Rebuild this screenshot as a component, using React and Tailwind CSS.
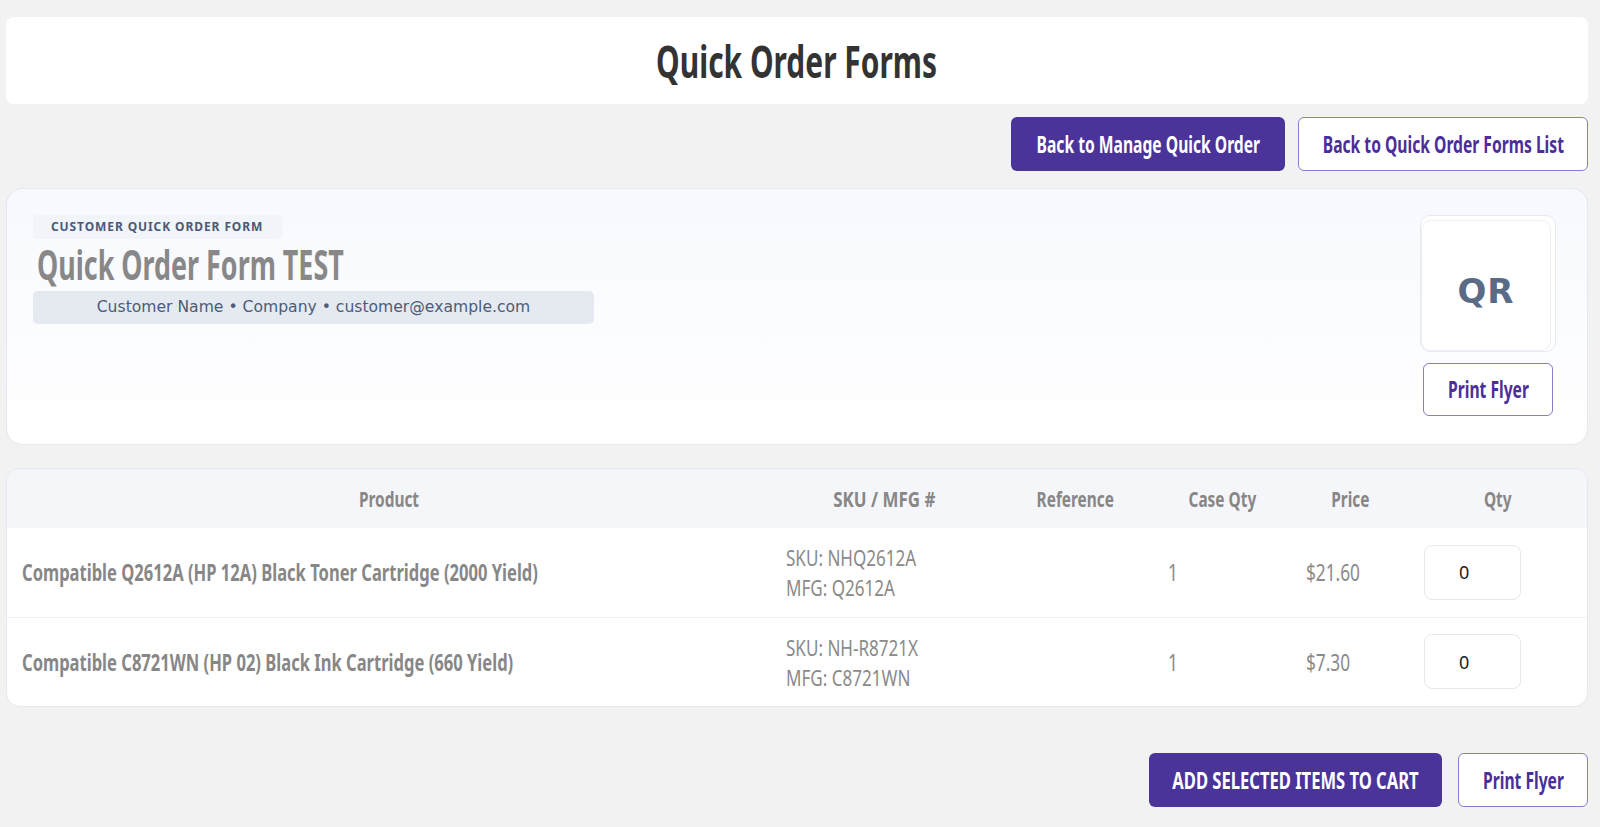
// Condensed look: Noto Sans squeezed horizontally, since no narrow family is installed
function Narrow({ children, className = "" }) {
  return <span className={`inline-block whitespace-nowrap font-['Noto_Sans',sans-serif] ${className}`}>{children}</span>;
}

const rows = [
  { name: "Compatible Q2612A (HP 12A) Black Toner Cartridge (2000 Yield)", sku: "NHQ2612A", mfg: "Q2612A", caseQty: 1, price: "$21.60" },
  { name: "Compatible C8721WN (HP 02) Black Ink Cartridge (660 Yield)", sku: "NH-R8721X", mfg: "C8721WN", caseQty: 1, price: "$7.30" },
];

const headers = [
  { label: "Product", scale: "scale-x-[0.7]" },
  { label: "SKU / MFG #", scale: "scale-x-[0.77]" },
  { label: "Reference", scale: "scale-x-[0.7]" },
  { label: "Case Qty", scale: "scale-x-[0.7]" },
  { label: "Price", scale: "scale-x-[0.7]" },
  { label: "Qty", scale: "scale-x-[0.7]" },
];

export default function App() {
  return (
    <div className="min-h-screen bg-[#f2f2f2] pl-[6px] pr-[12px] pt-[17px] pb-[21px]">
      {/* Page title */}
      <div className="h-[87px] bg-white rounded-[8px] flex items-center justify-center">
        <h1 className="text-[44px] font-bold text-[#333333] leading-none flex justify-center">
          <Narrow className="scale-x-[0.68]">Quick Order Forms</Narrow>
        </h1>
      </div>

      {/* Top actions */}
      <div className="mt-[13px] flex justify-end gap-[13px]">
        <button className="h-[54px] w-[274px] rounded-[6px] bg-[#4a3399] text-white text-[23px] font-bold flex items-center justify-center">
          <Narrow className="scale-x-[0.68]">Back to Manage Quick Order</Narrow>
        </button>
        <button className="h-[54px] w-[290px] rounded-[6px] bg-white border border-[#8a7cc6] text-[#4b2e9a] text-[23px] font-bold flex items-center justify-center">
          <Narrow className="scale-x-[0.68]">Back to Quick Order Forms List</Narrow>
        </button>
      </div>

      {/* Form header card */}
      <div className="mt-[17px] h-[257px] rounded-[16px] border border-[#e4e8f0] bg-gradient-to-b from-[#f7f9fe] to-white pl-[26px] pr-[31px] pt-[26px] flex justify-between">
        <div className="flex flex-col items-start">
          <span className="font-['Noto_Sans',sans-serif] text-[12px] font-bold tracking-[0.9px] uppercase text-[#4a5a75] bg-[#f1f4f9] rounded-[4px] h-[24px] w-[249px] pl-[18px] flex items-center">
            Customer Quick Order Form
          </span>
          <h2 className="ml-[4px] text-[42px] font-bold text-[#888888] leading-[50px]">
            <Narrow className="scale-x-[0.64] origin-left">Quick Order Form TEST</Narrow>
          </h2>
          <div className="mt-[2px] w-[561px] h-[33px] rounded-[5px] bg-[#e5e9f0] flex items-center justify-center font-['DejaVu_Sans',sans-serif] text-[15.6px] text-[#4c5c79]">
            Customer Name • Company • customer@example.com
          </div>
        </div>
        <div className="flex flex-col items-center">
          <div className="relative w-[136px] h-[137px] rounded-[10px] border border-[#e6e9f0] bg-white">
            <div className="absolute left-0 right-[4px] top-[4px] bottom-0 rounded-[10px] border border-[#eceef4] flex items-center justify-center pt-[11px]">
              <span className="font-['DejaVu_Sans',sans-serif] text-[34px] font-bold text-[#5a6b85] tracking-[1px]">QR</span>
            </div>
          </div>
          <button className="mt-[11px] h-[53px] w-[130px] rounded-[6px] bg-white border border-[#8a7cc6] text-[#4b2e9a] text-[23px] font-bold flex items-center justify-center">
            <Narrow className="scale-x-[0.68]">Print Flyer</Narrow>
          </button>
        </div>
      </div>

      {/* Items table */}
      <div className="mt-[23px] rounded-[14px] border border-[#e4e8f0] bg-white overflow-hidden">
        <table className="w-full table-fixed border-collapse">
          <colgroup>
            <col className="w-[764px]" />
            <col className="w-[226px]" />
            <col className="w-[156px]" />
            <col className="w-[138px]" />
            <col className="w-[118px]" />
            <col className="w-[178px]" />
          </colgroup>
          <thead>
            <tr className="h-[59px] bg-[#f5f6fa] text-[22px] text-[#878787]">
              {headers.map((h) => (
                <th key={h.label} className="font-bold">
                  <Narrow className={h.scale}>{h.label}</Narrow>
                </th>
              ))}
            </tr>
          </thead>
          <tbody>
            {rows.map((r, i) => (
              <tr key={r.sku} className={`h-[89px] ${i > 0 ? "border-t border-[#eef0f3]" : ""}`}>
                <td className="px-[15px] text-[23px] font-bold text-[#878787]">
                  <Narrow className="scale-x-[0.72] origin-left">{r.name}</Narrow>
                </td>
                <td className="px-[15px] text-[22px] text-[#8a8a8a] leading-[30px]">
                  <div><Narrow className="scale-x-[0.775] origin-left">SKU: {r.sku}</Narrow></div>
                  <div><Narrow className="scale-x-[0.775] origin-left">MFG: {r.mfg}</Narrow></div>
                </td>
                <td className="px-[15px]"></td>
                <td className="px-[15px] text-[23px] text-[#8a8a8a]">
                  <Narrow className="scale-x-[0.75] origin-left">{r.caseQty}</Narrow>
                </td>
                <td className="px-[15px] text-[23px] text-[#8a8a8a]">
                  <Narrow className="scale-x-[0.75] origin-left">{r.price}</Narrow>
                </td>
                <td className="px-[15px]">
                  <input
                    type="text"
                    defaultValue="0"
                    className="w-[97px] h-[55px] rounded-[8px] border border-[#e6e8ec] bg-white pl-[34px] font-['Noto_Sans',sans-serif] text-[18px] text-[#222222] outline-none"
                  />
                </td>
              </tr>
            ))}
          </tbody>
        </table>
      </div>

      {/* Bottom actions */}
      <div className="mt-[46px] flex justify-end gap-[16px]">
        <button className="h-[54px] w-[293px] rounded-[6px] bg-[#4a3399] text-white text-[24px] font-bold flex items-center justify-center">
          <Narrow className="scale-x-[0.69]">ADD SELECTED ITEMS TO CART</Narrow>
        </button>
        <button className="h-[54px] w-[130px] rounded-[6px] bg-white border border-[#8a7cc6] text-[#4b2e9a] text-[23px] font-bold flex items-center justify-center">
          <Narrow className="scale-x-[0.68]">Print Flyer</Narrow>
        </button>
      </div>
    </div>
  );
}
